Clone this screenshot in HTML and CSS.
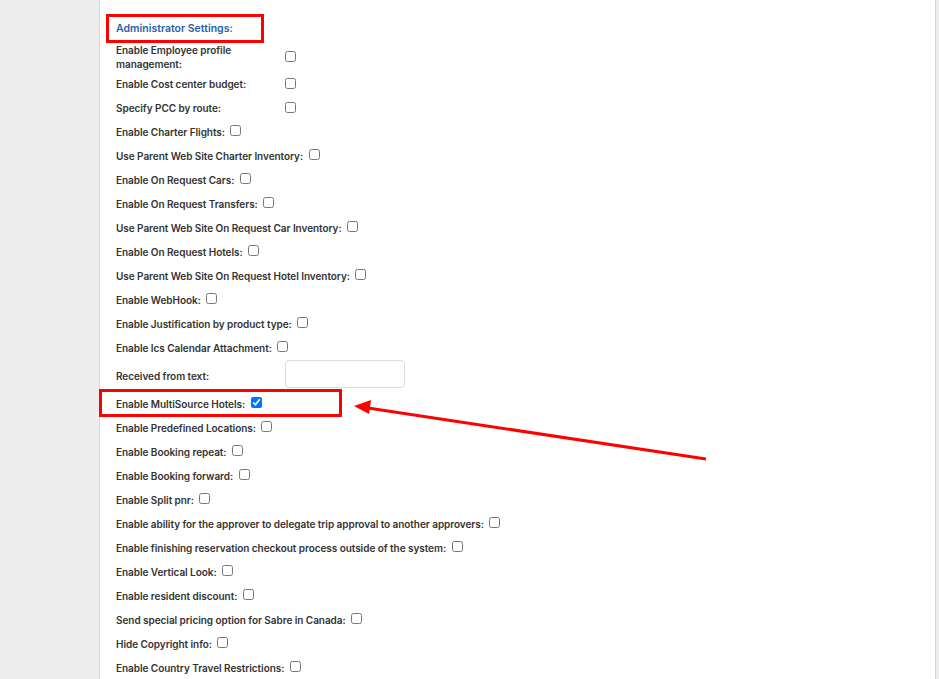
FILE: index.html
```html
<!DOCTYPE html>
<html lang="en">
<head>
    <meta charset="UTF-8">
    <title>Administrator Settings</title>
    <link rel="stylesheet" href="styles.css">
</head>
<body>

    <div class="page">
        <div class="panel">
            <div class="section-title">Administrator Settings:</div>

            <table class="settings-table">
                <tr class="tall">
                    <td class="label-cell">Enable Employee profile<br>management:</td>
                    <td><input type="checkbox"></td>
                </tr>
                <tr>
                    <td class="label-cell">Enable Cost center budget:</td>
                    <td><input type="checkbox"></td>
                </tr>
                <tr>
                    <td class="label-cell">Specify PCC by route:</td>
                    <td><input type="checkbox"></td>
                </tr>
            </table>

            <div class="row">Enable Charter Flights: <input type="checkbox"></div>
            <div class="row">Use Parent Web Site Charter Inventory: <input type="checkbox"></div>
            <div class="row">Enable On Request Cars: <input type="checkbox"></div>
            <div class="row">Enable On Request Transfers: <input type="checkbox"></div>
            <div class="row">Use Parent Web Site On Request Car Inventory: <input type="checkbox"></div>
            <div class="row">Enable On Request Hotels: <input type="checkbox"></div>
            <div class="row">Use Parent Web Site On Request Hotel Inventory: <input type="checkbox"></div>
            <div class="row">Enable WebHook: <input type="checkbox"></div>
            <div class="row">Enable Justification by product type: <input type="checkbox"></div>
            <div class="row">Enable Ics Calendar Attachment: <input type="checkbox"></div>

            <table class="settings-table">
                <tr class="input-row">
                    <td class="label-cell">Received from text:</td>
                    <td><input type="text" class="text-input"></td>
                </tr>
            </table>

            <div class="row">Enable MultiSource Hotels: <input type="checkbox" checked></div>
            <div class="row">Enable Predefined Locations: <input type="checkbox"></div>
            <div class="row">Enable Booking repeat: <input type="checkbox"></div>
            <div class="row">Enable Booking forward: <input type="checkbox"></div>
            <div class="row">Enable Split pnr: <input type="checkbox"></div>
            <div class="row">Enable ability for the approver to delegate trip approval to another approvers: <input type="checkbox"></div>
            <div class="row">Enable finishing reservation checkout process outside of the system: <input type="checkbox"></div>
            <div class="row">Enable Vertical Look: <input type="checkbox"></div>
            <div class="row">Enable resident discount: <input type="checkbox"></div>
            <div class="row">Send special pricing option for Sabre in Canada: <input type="checkbox"></div>
            <div class="row">Hide Copyright info: <input type="checkbox"></div>
            <div class="row">Enable Country Travel Restrictions: <input type="checkbox"></div>
        </div>

        <!-- annotations drawn over the screenshot -->
        <div class="mark mark-title"></div>
        <div class="mark mark-multisource"></div>
        <svg class="arrow" width="939" height="679" viewBox="0 0 939 679">
            <line x1="706" y1="459" x2="368" y2="408" stroke="#ff0000" stroke-width="3"/>
            <polygon points="354,406 371,400 369,414" fill="#ff0000"/>
        </svg>
    </div>

</body>
</html>
```

FILE: styles.css
```css
body {
    margin: 0;
    padding: 0;
    background-color: #ededed;
    font-family: Inter, "Noto Sans", sans-serif;
    font-size: 10px;
    font-weight: 600;
    letter-spacing: -0.05px;
    color: #333;
    overflow: hidden;
}
.page {
    position: relative;
    height: 679px;
    overflow: hidden;
}
.panel {
    margin-left: 99px;
    width: 837px;
    height: 679px;
    background-color: #fff;
    border-left: 1px solid #d6d6d6;
    border-right: 1px solid #d6d6d6;
    padding: 16px 0 0 16px;
    box-sizing: border-box;
    overflow: hidden;
}
.section-title {
    height: 26px;
    line-height: 26px;
    color: #2c5ea8;
    font-size: 10.5px;
    letter-spacing: 0;
}
.settings-table {
    border-collapse: collapse;
}
.settings-table td {
    padding: 0;
    height: 24px;
}
.settings-table .label-cell {
    width: 169px;
    line-height: 14px;
}
.settings-table .tall td {
    height: 30px;
}
.settings-table .input-row td {
    height: 32px;
}
.row {
    height: 24px;
    display: flex;
    align-items: center;
    white-space: pre;
}
input[type="checkbox"] {
    width: 11px;
    height: 11px;
    margin: 0 0 4px 3px;
}
.settings-table input[type="checkbox"] {
    margin: 0 0 2px 0;
}
.text-input {
    display: block;
    width: 120px;
    height: 28px;
    box-sizing: border-box;
    border: 1px solid #dcdcdc;
    border-radius: 4px;
    margin-top: -4px;
}
.mark {
    position: absolute;
    border: 3px solid #ff0000;
    box-sizing: border-box;
}
.mark-title {
    left: 106px;
    top: 14px;
    width: 158px;
    height: 29px;
}
.mark-multisource {
    left: 99px;
    top: 389px;
    width: 243px;
    height: 28px;
}
.arrow {
    position: absolute;
    left: 0;
    top: 0;
}
```
